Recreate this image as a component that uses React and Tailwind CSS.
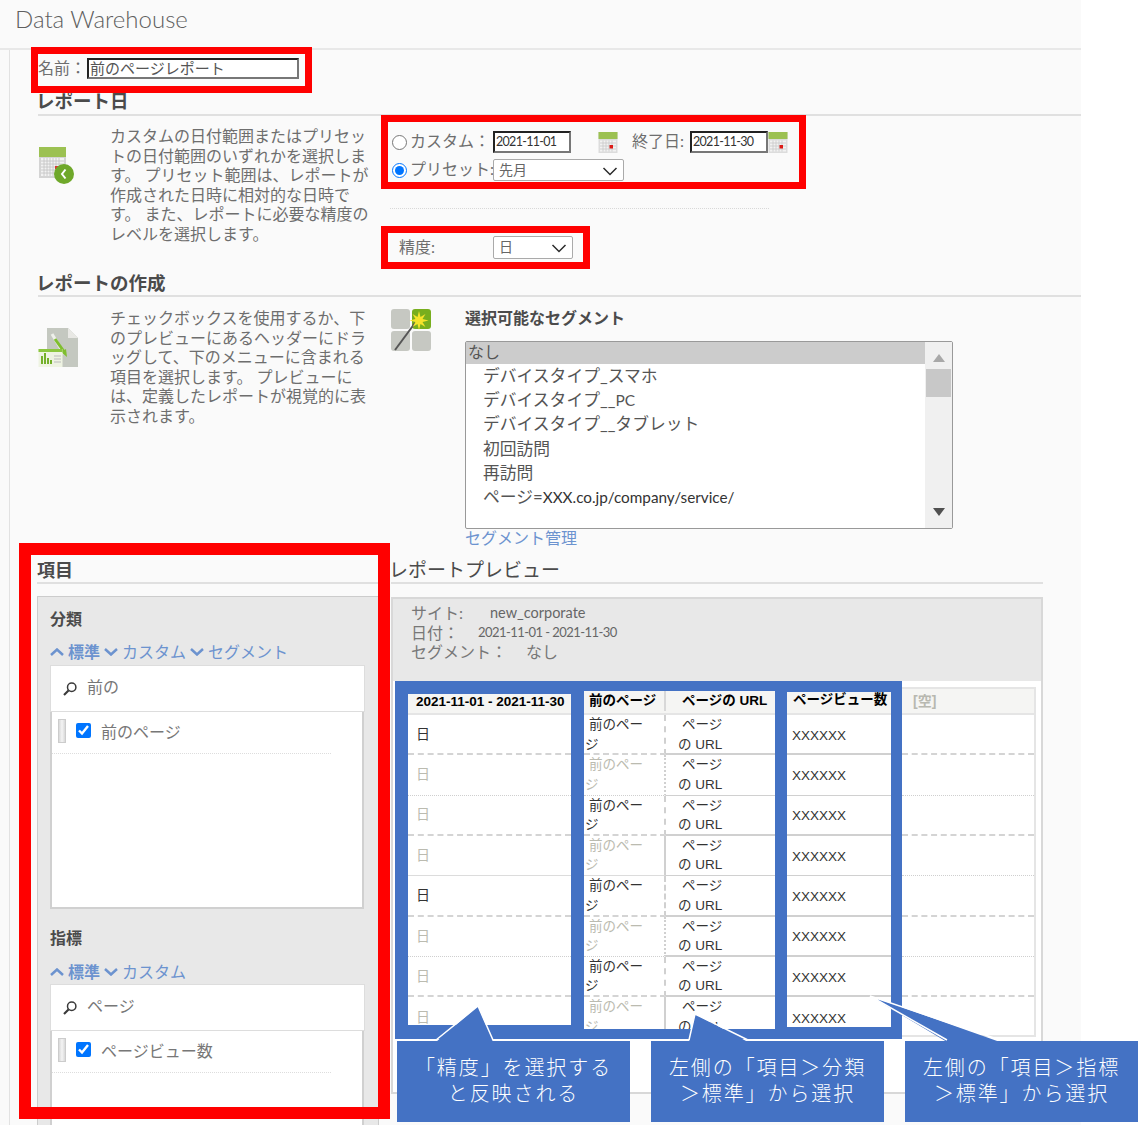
const BLUE = "bg-[#4472c4]";

function SmallCalendar() {
  return (
    <svg width="20" height="21" viewBox="0 0 20 21" className="shrink-0">
      <rect x="0.5" y="0" width="19" height="21" fill="#dcdcdc" />
      <rect x="0.5" y="0" width="19" height="7" fill="#9cc152" />
      <rect x="2" y="8.500" width="16" height="11" fill="#f2f2f2" />
      <path d="M2 11h16M2 14h16M2 17h16M5 8.500v11M8 8.500v11M11 8.500v11M14 8.500v11" stroke="#c8c8c8" strokeWidth="0.8" />
      <rect x="11.500" y="13" width="3.500" height="3.500" fill="#dd1b16" />
    </svg>
  );
}

function BigCalendar() {
  return (
    <svg width="36" height="40" viewBox="0 0 36 40" className="shrink-0">
      <rect x="1" y="1" width="27" height="31" fill="#d4d4d4" />
      <rect x="1" y="1" width="27" height="10" fill="#9cc152" />
      <rect x="3" y="12" width="23" height="18" fill="#f2f2f2" />
      <path d="M3 15h23M3 18h23M3 21h23M3 24h23M3 27h23M6 12v18M9 12v18M12 12v18M15 12v18M18 12v18M21 12v18" stroke="#c2c2c2" strokeWidth="0.8" />
      <rect x="17" y="20" width="4" height="3" fill="#d33" />
      <circle cx="26" cy="28" r="10" fill="#6fa82a" />
      <path d="M27.500 23.500l-3.500 4.500 3.500 4.500" fill="none" stroke="#fff" strokeWidth="2" />
    </svg>
  );
}

function ReportIcon() {
  return (
    <svg width="40" height="40" viewBox="0 0 40 40" className="shrink-0">
      <path d="M9 1h21l10 10v29H9z" fill="#c4c8c0" />
      <path d="M30 1l10 10H30z" fill="#e8e8e4" />
      <path d="M14 7l12 20" stroke="#eef0ea" strokeWidth="3" />
      <path d="M17 12l10 14" stroke="#7fbe2e" strokeWidth="3" />
      <path d="M29 30l-6-5 5-3z" fill="#7fbe2e" />
      <rect x="0.5" y="22" width="24" height="18" fill="#eef3e2" />
      <rect x="0.5" y="22" width="24" height="3" fill="#8cc63f" />
      <path d="M4 37v-8M7 37v-11M10 37v-6M13 37v-4" stroke="#74b02a" strokeWidth="2" />
      <path d="M16 29h7M16 32h7M16 35h7" stroke="#bcbcbc" strokeWidth="1.200" />
    </svg>
  );
}

function SegmentIcon() {
  return (
    <svg width="40" height="42" viewBox="0 0 40 42" className="shrink-0">
      <rect x="0" y="0" width="19" height="20" rx="3" fill="#c6c8c2" />
      <rect x="21" y="0" width="19" height="20" rx="3" fill="#78ae1e" />
      <rect x="0" y="22" width="19" height="20" rx="3" fill="#c6c8c2" />
      <rect x="21" y="22" width="19" height="20" rx="3" fill="#c6c8c2" />
      <path d="M4 41L24 14" stroke="#555" strokeWidth="2" />
      <path d="M28 2l1.500 6 5-3-3 5 6 1.500-6 1.500 3 5-5-3-1.500 6-1.500-6-5 3 3-5-6-1.500 6-1.500-3-5 5 3z" fill="#f6e32b" />
    </svg>
  );
}

function SearchIcon() {
  return (
    <svg width="14" height="14" viewBox="0 0 14 14" className="shrink-0">
      <circle cx="8.700" cy="5.300" r="4.200" fill="none" stroke="#3a3a3a" strokeWidth="1.500" />
      <path d="M5.500 8.500L1 13" stroke="#3a3a3a" strokeWidth="2.200" />
    </svg>
  );
}

function Chevron({ up, className }) {
  return (
    <svg width="14" height="8" viewBox="0 0 14 8" className={className}>
      <path d={up ? "M1 7l6-5.500 6 5.500" : "M1 1l6 5.500 6-5.500"} fill="none" stroke="#6c93cf" strokeWidth="2.500" />
    </svg>
  );
}

function FakeInput({ w, children }) {
  return (
    <div className={`${w} h-[22px] bg-white border-2 border-t-[#222] border-l-[#222] border-r-[#777] border-b-[#777] text-[12.500px] leading-[17px] text-[#333] tracking-[-0.7px] pl-[1px] overflow-hidden whitespace-nowrap`}>
      {children}
    </div>
  );
}

function FakeSelect({ w, h, chevronLeft, children }) {
  return (
    <div className={`relative ${w} ${h} flex items-center bg-white border border-[#aaa] rounded-[2px] pl-[5px] pb-[2px] text-[14px] text-[#666]`}>
      {children}
      <svg width="16" height="9" viewBox="0 0 16 9" className={`absolute ${chevronLeft} top-[7px]`}>
        <path d="M1.500 1l6.500 6.500 6.500-6.500" fill="none" stroke="#2b2b2b" strokeWidth="1.500" />
      </svg>
    </div>
  );
}

function FieldRow({ label }) {
  return (
    <div className="w-[279px] h-[42px] flex items-start pt-[7px] border-b border-dotted border-[#ddd]">
      <div className="ml-[6px] w-[8px] h-[24px] bg-gradient-to-r from-[#d8d8d8] via-[#f4f4f4] to-[#d8d8d8] border border-[#ccc]" />
      <input type="checkbox" checked readOnly className="ml-[10px] mt-[4px] w-[15px] h-[15px]" />
      <span className="ml-[10px] mt-[3px] text-[16px] leading-[20px] text-[#777]">{label}</span>
    </div>
  );
}

function FieldGroup({ title, links, search, field, listHeight, titleClass }) {
  return (
    <div>
      <div className={`${titleClass} text-[16px] leading-[20px] font-bold text-[#4b4b4b]`}>{title}</div>
      <div className={`flex items-center h-[20px] text-[16px] text-[#6c93cf] ${title === "分類" ? "mt-[13px]" : "mt-[14px]"}`}>
        <Chevron up className="mr-[4px]" />
        <span className="font-bold mr-[4px]">標準</span>
        {links.map((l) => (
          <span key={l} className="flex items-center">
            <Chevron className="mr-[4px]" />
            <span className="mr-[4px]">{l}</span>
          </span>
        ))}
      </div>
      <div className={`${title === "分類" ? "mt-[3px]" : "mt-[2px]"} w-[315px] h-[47px] flex items-center gap-[10px] pl-[12px] bg-white border border-[#ddd] text-[16px] text-[#777]`}>
        <SearchIcon />
        <span className="pb-[3px]">{search}</span>
      </div>
      <div className={`w-[314px] ${listHeight} bg-white border-2 border-t-0 border-[#d0d0d0]`}>
        <FieldRow label={field} />
      </div>
    </div>
  );
}

const lines = ["dashed", "dotted", "dashed", "solid", "dashed", "dotted", "dashed", "none"];
const col4lines = ["dashed", "dotted", "dashed", "dotted", "dashed", "dotted", "dashed", "none"];
const lineClass = {
  dashed: "border-b-2 border-dashed border-[#d4d4d4]",
  dotted: "border-b border-dotted border-[#cfcfcf]",
  solid: "border-b border-solid border-[#dcdcdc]",
  none: "",
};
const solidClass = ["border-b-2", "border-b", "border-b-2", "border-b", "border-b-2", "border-b-2", "border-b-2", ""];

function PreviewTable() {
  return (
    <div className="flex items-start ml-[2px]">
      <div className={`${BLUE} w-[507px] h-[358px] flex items-start`}>
        <div className="ml-[13px] mt-[13px] w-[163px] h-[331px] bg-white overflow-hidden font-['Liberation_Sans','Noto_Sans_CJK_JP',sans-serif]">
          <div className="h-[21px] bg-[#f5f5f3] border-b-2 border-[#e5e5e5] pl-[8px] text-[13.500px] leading-[15px] font-bold text-black whitespace-nowrap">2021-11-01 - 2021-11-30</div>
          {lines.map((l, i) => (
            <div key={i} className={`h-[40.33px] flex items-center pl-[8px] text-[14px] ${lineClass[l]} ${i === 0 || i === 4 ? "text-[#333]" : "text-[#bbbbb0]"}`}>日</div>
          ))}
        </div>

        <div className="ml-[13px] mt-[10px] w-[191px] h-[338px] bg-white overflow-hidden font-['Liberation_Sans','Noto_Sans_CJK_JP',sans-serif]">
          <div className="h-[24px] flex bg-[#f5f5f3] border-b-2 border-[#e5e5e5] text-[13.500px] leading-[19px] font-bold text-black">
            <div className="w-[82px] h-[20px] pl-[5px] border-r-2 border-[#d8d8d8] whitespace-nowrap">前のページ</div>
            <div className="pl-[16px] whitespace-nowrap">ページの URL</div>
          </div>
          {lines.map((l, i) => (
            <div key={i} className="h-[40.33px] flex text-[13.500px] leading-[19.500px] text-[#333]">
              <div className={`w-[82px] pl-[1px] indent-[4px] border-r-2 border-r-[#d0d0d0] ${lineClass[l]} ${i % 2 === 0 ? "text-[#333]" : "text-[#bbbbb0]"}`}>
                前のペー<br />ジ
              </div>
              <div className={`flex-1 pl-[12px] indent-[4px] border-[#d0d0d0] ${solidClass[i]}`}>
                ページ<br />の URL
              </div>
            </div>
          ))}
        </div>

        <div className="ml-[12px] mt-[11px] w-[104px] h-[335px] bg-white overflow-hidden font-['Liberation_Sans','Noto_Sans_CJK_JP',sans-serif]">
          <div className="h-[23px] bg-[#f5f5f3] border-b-2 border-[#e5e5e5] pl-[6px] text-[13.500px] leading-[16px] font-bold text-black whitespace-nowrap">ページビュー数</div>
          {lines.map((l, i) => (
            <div key={i} className={`h-[40.33px] flex items-center pl-[5px] pt-[3px] text-[13.500px] text-[#333] border-[#d0d0d0] ${solidClass[i]}`}>XXXXXX</div>
          ))}
        </div>
      </div>

      <div className="mt-[6px] w-[134px] h-[350px] border-2 border-l-0 border-[#e5e5e5] font-['Liberation_Sans','Noto_Sans_CJK_JP',sans-serif]">
        <div className="h-[26px] flex items-center pl-[11px] bg-[#f5f5f3] border-b-2 border-[#e5e5e5] text-[14px] font-bold text-[#b8b8b0]">[空]</div>
        {col4lines.map((l, i) => (
          <div key={i} className={`h-[40.33px] ${lineClass[l]}`} />
        ))}
      </div>
    </div>
  );
}

function RedBox({ className }) {
  return <div className={`absolute border-[#ff0000] ${className}`} />;
}

function Callout({ className, children }) {
  return (
    <div className={`absolute top-[1041px] h-[81px] w-[233px] ${BLUE} flex items-center justify-center pb-[3px] text-center text-white text-[20px] leading-[26px] tracking-[1.900px] font-light ${className}`}>
      <div>{children}</div>
    </div>
  );
}

const segments = [
  "デバイスタイプ_スマホ",
  <>デバイスタイプ__<span className="text-[15.500px]">PC</span></>,
  "デバイスタイプ__タブレット",
  "初回訪問",
  "再訪問",
  <>ページ=<span className="text-[15.300px] text-[#333]">XXX.co.jp/company/service/</span></>,
];

export default function App() {
  return (
    <div className="relative w-[1140px] h-[1125px] overflow-hidden bg-white [font-family:'Lato','Noto_Sans_CJK_JP',sans-serif] text-[#6e6e6e]">
      <div className="w-[1081px] h-[1125px] bg-[#fafafa]">
        <div className="h-[50px] border-b-2 border-[#e8e8e8] pl-[15px] pt-[1px] text-[24px] leading-[36px] font-light text-[#5f5f5f]">Data Warehouse</div>

        <div className="ml-[9px] h-[1075px] border-l border-[#e2e2e2] pl-[28px]">
          <div className="h-[40px] pt-[8px] flex items-start">
            <div className="w-[49px] h-[20px] text-[16px] leading-[20px]">名前：</div>
            <div className="w-[212px] h-[21px] bg-white border-2 border-t-[#222] border-l-[#222] border-r-[#777] border-b-[#777] text-[15px] leading-[17px] text-[#555] pl-[1px] whitespace-nowrap">前のページレポート</div>
          </div>

          <div className="h-[26px] -indent-[2px] border-b-2 border-[#e0e0e0] text-[18.500px] leading-[22px] font-bold text-[#4b4b4b]">レポート日</div>

          <div className="h-[154px] flex items-start">
            <div className="w-[72px] mt-[30px]"><BigCalendar /></div>
            <p className="w-[271px] pt-[10px] text-[16px] leading-[19.600px] whitespace-nowrap">
              カスタムの日付範囲またはプリセッ<br />
              トの日付範囲のいずれかを選択しま<br />
              す。 プリセット範囲は、レポートが<br />
              作成された日時に相対的な日時で<br />
              す。 また、レポートに必要な精度の<br />
              レベルを選択します。
            </p>
            <div className="pt-[15px]">
              <div className="flex items-center h-[22px] text-[16px]">
                <input type="radio" readOnly checked={false} className="ml-[11px] w-[15px] h-[15px] m-0" />
                <span className="ml-[3px] w-[83px] pb-[2px] whitespace-nowrap">カスタム：</span>
                <FakeInput w="w-[78px]">2021-11-01</FakeInput>
                <div className="ml-[27px]"><SmallCalendar /></div>
                <span className="ml-[14px] w-[58px] pb-[2px] whitespace-nowrap">終了日:</span>
                <FakeInput w="w-[78px]">2021-11-30</FakeInput>
                <SmallCalendar />
              </div>
              <div className="flex items-center h-[22px] mt-[6px] text-[16px]">
                <input type="radio" readOnly checked className="ml-[11px] w-[15px] h-[15px] m-0" />
                <span className="ml-[3px] w-[83px] pb-[2px] whitespace-nowrap">プリセット:</span>
                <FakeSelect w="w-[131px]" h="h-[22px]" chevronLeft="left-[108px]">先月</FakeSelect>
              </div>
              <div className="mt-[27px] ml-[9px] w-[379px] border-t border-dotted border-[#d8d8d8]" />
              <div className="flex items-center h-[23px] mt-[27px] text-[16px]">
                <span className="ml-[18px] w-[94px] pb-[2px]">精度:</span>
                <FakeSelect w="w-[80px]" h="h-[23px]" chevronLeft="left-[57px]">日</FakeSelect>
              </div>
            </div>
          </div>

          <div className="h-[27px] pt-[2px] -indent-[2px] border-b-2 border-[#e0e0e0] text-[18.500px] leading-[22px] font-bold text-[#4b4b4b]">レポートの作成</div>

          <div className="h-[258px] flex items-start">
            <div className="w-[72px] mt-[30px]"><ReportIcon /></div>
            <p className="w-[271px] pt-[11px] text-[16px] leading-[19.600px] whitespace-nowrap">
              チェックボックスを使用するか、下<br />
              のプレビューにあるヘッダーにドラ<br />
              ッグして、下のメニューに含まれる<br />
              項目を選択します。 プレビューに<br />
              は、定義したレポートが視覚的に表<br />
              示されます。
            </p>
            <div className="ml-[10px] mt-[12px] w-[40px]"><SegmentIcon /></div>
            <div className="ml-[34px] w-[488px]">
              <div className="pt-[11px] text-[16px] leading-[20px] font-bold text-[#4b4b4b]">選択可能なセグメント</div>
              <div className="mt-[13px] h-[188px] flex bg-white border border-[#999] rounded-[2px] text-[#555] text-[16.800px]">
                <div className="flex-1">
                  <div className="h-[22px] bg-[#cccccc] pl-[2px] text-[16px] leading-[20px]">なし</div>
                  {segments.map((s, i) => (
                    <div key={i} className="h-[24.200px] pl-[17px] leading-[24px] whitespace-nowrap">{s}</div>
                  ))}
                </div>
                <div className="w-[27px] bg-[#f0f0f0] flex flex-col items-center">
                  <svg width="12" height="8" viewBox="0 0 12 8" className="mt-[12px]"><path d="M6 0l6 8H0z" fill="#a8a8a8" /></svg>
                  <div className="mt-[7px] w-[25px] h-[28px] bg-[#c8c8c8]" />
                  <svg width="12" height="8" viewBox="0 0 12 8" className="mt-[111px]"><path d="M0 0h12L6 8z" fill="#505050" /></svg>
                </div>
              </div>
              <div className="text-[16px] leading-[18px] text-[#6c93cf]">セグメント管理</div>
            </div>
          </div>

          <div className="flex items-start">
            <div className="-ml-px w-[342px]">
              <div className="h-[29px] pt-[4px] border-b-2 border-[#e0e0e0] text-[18px] leading-[22px] font-bold text-[#4b4b4b]">項目</div>
              <div className="mt-[12px] h-[540px] bg-[#e8e8e8] border border-[#cccccc] pl-[12px]">
                <FieldGroup title="分類" titleClass="mt-[12px]" links={["カスタム", "セグメント"]} search="前の" field="前のページ" listHeight="h-[197px]" />
                <FieldGroup title="指標" titleClass="mt-[19px]" links={["カスタム"]} search="ページ" field="ページビュー数" listHeight="h-[120px]" />
              </div>
            </div>

            <div className="ml-[12px] w-[652px]">
              <div className="h-[29px] pt-[4px] -indent-[2px] border-b-2 border-[#e0e0e0] text-[19px] leading-[22px] text-[#4b4b4b]">レポートプレビュー</div>
              <div className="mt-[13px] h-[497px] bg-white border-2 border-[#d8d8d8]">
                <div className="h-[82px] bg-[#e8e8e8] pl-[18px] pt-[4px] text-[16px] leading-[19.500px] text-[#777]">
                  <div className="flex"><span className="w-[79px]">サイト:</span><span className="text-[14.500px] text-[#666]">new_corporate</span></div>
                  <div className="flex"><span className="w-[67px]">日付：</span><span className="text-[13px] tracking-[-0.55px] text-[#666]">2021-11-01 - 2021-11-30</span></div>
                  <div className="flex"><span className="w-[115px]">セグメント：</span><span>なし</span></div>
                </div>
                <PreviewTable />
              </div>
            </div>
          </div>
        </div>
      </div>

      <RedBox className="left-[31px] top-[47px] w-[281px] h-[46px] border-[7px]" />
      <RedBox className="left-[381px] top-[115px] w-[425px] h-[74px] border-[7px]" />
      <RedBox className="left-[381px] top-[226px] w-[209px] h-[43px] border-[7px]" />
      <RedBox className="left-[19px] top-[543px] w-[371px] h-[576px] border-[12px]" />

      <svg width="1140" height="1125" viewBox="0 0 1140 1125" className="absolute left-0 top-0">
        <path d="M436 1042L478 1006L493 1042z" fill="#4472c4" />
        <path d="M436 1040L478 1006L493 1040" fill="none" stroke="#fff" strokeWidth="1.500" />
        <path d="M689 1042L695 1014L748 1042z" fill="#4472c4" />
        <path d="M689 1040L695 1014L748 1040" fill="none" stroke="#fff" strokeWidth="1.500" />
        <path d="M947 1042L870 996L1000 1042z" fill="#4472c4" />
        <path d="M947 1040L870 996L1000 1040" fill="none" stroke="#fff" strokeWidth="1.500" />
      </svg>

      <Callout className="left-[397px]">「精度」を選択する<br />と反映される</Callout>
      <Callout className="left-[651px]">左側の「項目＞分類<br />＞標準」から選択</Callout>
      <Callout className="left-[905px]">左側の「項目＞指標<br />＞標準」から選択</Callout>
    </div>
  );
}
